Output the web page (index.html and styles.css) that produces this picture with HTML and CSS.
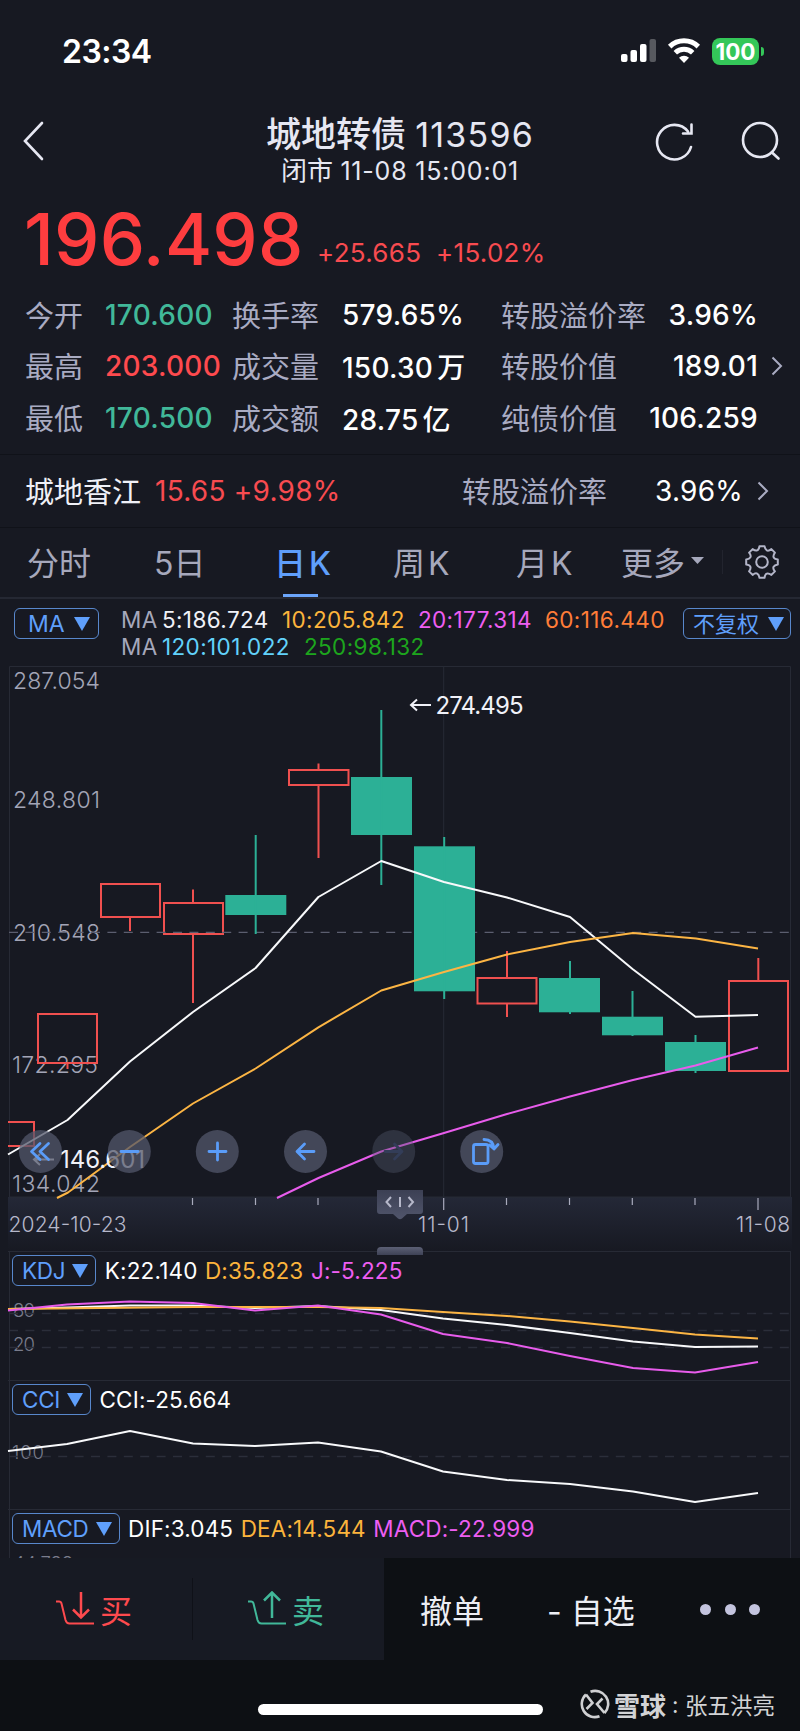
FILE: index.html
```html
<!DOCTYPE html>
<html lang="zh-CN">
<head>
  <meta charset="UTF-8">
  <meta name="viewport" content="width=device-width, initial-scale=1.0">
  <title>城地转债 113596</title>
  <link rel="stylesheet" href="styles.css">
</head>
<body>
  <div class="phone">
    <div class="status-bar">
      <span class="clock">23:34</span>
      <div class="status-icons">
        <svg class="signal" width="36" height="26" viewBox="0 0 36 26">
          <rect x="0" y="16" width="6.5" height="8" rx="2"/>
          <rect x="9.5" y="12" width="6.5" height="12" rx="2"/>
          <rect x="19" y="6" width="6.5" height="18" rx="2"/>
          <rect x="28.5" y="1" width="6.5" height="23" rx="2" opacity=".28"/>
        </svg>
        <svg class="wifi" width="34" height="26" viewBox="0 0 34 26">
          <path d="M17 25l-5-5.3a7.3 7.3 0 0 1 10 0z"/>
          <path class="arc" d="M8.3 14.7a12.7 12.7 0 0 1 17.4 0"/>
          <path class="arc" d="M2.7 8.6a20.6 20.6 0 0 1 28.6 0"/>
        </svg>
        <div class="battery">100</div>
      </div>
    </div>

    <header class="nav">
      <svg class="back" width="24" height="42" viewBox="0 0 24 42"><path d="M20 3L3 21l17 18"/></svg>
      <div class="nav-title">
        <h1>城地转债 <span>113596</span></h1>
        <p>闭市 <span>11-08 15:00:01</span></p>
      </div>
      <svg class="refresh" width="40" height="42" viewBox="0 0 40 42"><path d="M36 27A17.3 17.3 0 1 1 33 11.500M36.500 4.500V13.500H28"/></svg>
      <svg class="search" width="42" height="42" viewBox="0 0 42 42"><circle cx="20" cy="20" r="17"/><path d="M32 32.500L38.500 38.500"/></svg>
    </header>

    <section class="price">
      <span class="price-now">196.498</span>
      <span class="price-diff">+25.665</span>
      <span class="price-diff pct">+15.02%</span>
    </section>

    <section class="quote">
      <span class="label">今开</span><span class="value green">170.600</span>
      <span class="label">换手率</span><span class="value">579.65%</span>
      <span class="label">转股溢价率</span><span class="value end">3.96%</span><span></span>

      <span class="label">最高</span><span class="value red">203.000</span>
      <span class="label">成交量</span><span class="value">150.30<i>万</i></span>
      <span class="label">转股价值</span><span class="value end">189.01</span>
      <svg class="chevron" width="12" height="20" viewBox="0 0 12 20"><path d="M1.500 1.500L10 10l-8.500 8.500"/></svg>

      <span class="label">最低</span><span class="value green">170.500</span>
      <span class="label">成交额</span><span class="value">28.75<i>亿</i></span>
      <span class="label">纯债价值</span><span class="value end">106.259</span><span></span>
    </section>

    <section class="stock">
      <span class="stock-name">城地香江</span>
      <span class="stock-price">15.65 +9.98%</span>
      <span class="label">转股溢价率</span>
      <span class="stock-rate">3.96%</span>
      <svg class="chevron" width="12" height="20" viewBox="0 0 12 20"><path d="M1.500 1.500L10 10l-8.500 8.500"/></svg>
    </section>

    <nav class="tabs">
      <span class="tab">分时</span>
      <span class="tab">5日</span>
      <span class="tab active">日<b>K</b></span>
      <span class="tab">周<b>K</b></span>
      <span class="tab">月<b>K</b></span>
      <span class="tab more">更多<svg width="13" height="8" viewBox="0 0 13 8"><path d="M0 0h13L6.500 7z"/></svg></span>
      <span class="tab-settings">
        <svg width="36" height="36" viewBox="-18 -18 36 36">
          <path d="M-2.500-15.800H2.500Q3-12.600 4.800-11.600T9.400-12.900L12.900-9.400Q11-6.600 11.600-4.800T15.800-2.500V2.500Q12.600 3 11.600 4.800T12.900 9.400L9.400 12.900Q6.600 11 4.800 11.600T2.500 15.800H-2.500Q-3 12.600-4.800 11.600T-9.400 12.900L-12.900 9.400Q-11 6.600-11.600 4.800T-15.800 2.500V-2.500Q-12.600-3-11.600-4.800T-12.900-9.400L-9.400-12.900Q-6.600-11-4.800-11.600T-2.500-15.800z"/>
          <circle r="5.800"/>
        </svg>
      </span>
    </nav>

    <section class="ma">
      <span class="picker">MA<svg width="16" height="14" viewBox="0 0 16 14"><path d="M0 0h16L8 14z"/></svg></span>
      <div class="ma-values">
        <div class="ma-row">
          <span class="muted">MA</span><span>5:186.724</span><span class="orange">10:205.842</span><span class="pink">20:177.314</span><span class="coral">60:116.440</span>
        </div>
        <div class="ma-row second">
          <span class="muted">MA</span><span class="sky">120:101.022</span><span class="lime">250:98.132</span>
        </div>
      </div>
      <span class="picker adjust">不复权<svg width="16" height="14" viewBox="0 0 16 14"><path d="M0 0h16L8 14z"/></svg></span>
    </section>

    <!-- candlestick chart, viewBox shares the page's y axis -->
    <svg class="kline" width="800" height="590" viewBox="0 661 800 590">
      <defs>
        <linearGradient id="axisFill" x1="0" y1="0" x2="0" y2="1">
          <stop offset="0" stop-color="#242837"/><stop offset="1" stop-color="#171922"/>
        </linearGradient>
        <linearGradient id="gripFill" x1="0" y1="0" x2="0" y2="1">
          <stop offset="0" stop-color="#3c4054"/><stop offset="1" stop-color="#50556b"/>
        </linearGradient>
      </defs>
      <rect x="8" y="1197" width="784" height="54" fill="url(#axisFill)"/>
      <path class="frame" d="M9.500 1197V666.500H790.500V1197M443.700 666.500V1197M9.500 1197H790.500"/>

      <g class="axis-label">
        <text x="13" y="689" textLength="87">287.054</text>
        <text x="13" y="808" textLength="87">248.801</text>
        <text x="13" y="940.500" textLength="87">210.548</text>
        <text x="12" y="1073" textLength="86">172.295</text>
        <text x="12" y="1191.500" textLength="88">134.042</text>
      </g>

      <g class="up">
        <path d="M8 1122H34V1146H8"/>
        <rect x="38" y="1014" width="59" height="49"/><path d="M67.500 1063v6"/>
        <rect x="101" y="884" width="59" height="33"/><path d="M130 917v14"/>
        <rect x="164" y="903" width="59" height="31"/><path d="M193 889.500V903M193 934v69"/>
        <rect x="289" y="770" width="59.500" height="15"/><path d="M318.500 763.500V770M318.500 785v73"/>
        <rect x="477.500" y="978" width="59" height="25.500"/><path d="M507 951v27M507 1003.500V1017"/>
        <rect x="729" y="981" width="59" height="90"/><path d="M758.300 958v23"/>
      </g>
      <path class="mid-line" d="M9 932.300H790"/>
      <g class="down">
        <rect x="225.300" y="895" width="61" height="20"/><rect x="254.700" y="835" width="2" height="99"/>
        <rect x="351" y="777" width="61" height="58"/><rect x="380.300" y="710" width="2" height="175"/>
        <rect x="414" y="846.300" width="61" height="145"/><rect x="443.200" y="837" width="2" height="162"/>
        <rect x="539" y="978" width="61" height="34.300"/><rect x="569" y="961" width="2" height="53"/>
        <rect x="602" y="1016.700" width="61" height="18.600"/><rect x="631.500" y="991" width="2" height="45"/>
        <rect x="665" y="1042" width="61" height="29"/><rect x="694.500" y="1035" width="2" height="38"/>
      </g>

      <polyline class="line white" points="8,1154.500 67.500,1120 130,1061.500 193,1012 255.600,968 318.400,897 381.300,861 444,882 507,897.500 570,917 632.500,969 695.500,1016.700 758,1015"/>
      <polyline class="line gold" points="57,1198 68,1192.500 130,1147 193,1103.500 255.600,1068.500 318.400,1027.300 381.300,990.500 444,972 507,954.500 570,942 633,933 696,938.500 758,948.500"/>
      <polyline class="line magenta" points="277,1198 318.500,1178 381.300,1151.500 444,1133 507,1114 570,1096.500 633,1080 695.500,1065.500 758,1047.500"/>

      <g class="mark">
        <path d="M431 705H411M417 699.500L411 705l6 5.500"/>
        <text x="435.500" y="713.500" textLength="88">274.495</text>
        <path d="M54 1159.500H34M40 1154l-6 5.500 6 5.500"/>
        <text x="60" y="1167.700" textLength="85">146.601</text>
      </g>

      <g class="controls">
        <circle cx="40.500" cy="1151.500" r="21.500"/>
        <circle cx="129.300" cy="1151.500" r="21.500"/>
        <circle cx="217.300" cy="1151.500" r="21.500"/>
        <circle cx="305.500" cy="1151.500" r="21.500"/>
        <circle class="dim" cx="393.700" cy="1151.500" r="21.500"/>
        <circle cx="481.700" cy="1151.500" r="21.500"/>
        <path d="M40 1143.500l-8.500 8 8.500 8M48.500 1143.500l-8.500 8 8.500 8"/>
        <path d="M121 1151.500h17M209 1151.500h17M217.500 1143v17"/>
        <path d="M314 1151.500h-16.500M304.500 1144l-7.500 7.500 7.500 7.500"/>
        <path class="dim" d="M385 1151.500h16.500M394.500 1144l7.500 7.500-7.500 7.500"/>
        <rect x="473.500" y="1144.500" width="14.500" height="19" rx="2"/>
        <path d="M484 1139.500c6 0 9.500 3 10 9.500M489.500 1145l4.500 4 4-4.500"/>
      </g>

      <path class="ticks" d="M192.500 1198v7M255.500 1198v7M318 1198v7M506.500 1198v7M569.500 1198v7M632.300 1198v7M695 1198v7M443.700 1198v12M758 1198v12"/>
      <g class="date">
        <text x="8.500" y="1231.500" textLength="118">2024-10-23</text>
        <text x="418" y="1231.500" textLength="51">11-01</text>
        <text x="736" y="1231.500" textLength="54">11-08</text>
      </g>

      <path fill="url(#gripFill)" d="M377 1190h46v21a3 3 0 0 1-3 3h-13l-5 4.500q-2 1.500-4 0l-5-4.500h-13a3 3 0 0 1-3-3z"/>
      <path class="grip" d="M391 1197l-4.500 5 4.500 5M400 1197v10M408.500 1197l4.500 5-4.500 5"/>
    </svg>

    <section class="indicator">
      <div class="handle"></div>
      <svg class="plot" width="800" height="129" viewBox="0 1251 800 129">
        <path class="frame" d="M8 1251.500H791M9.500 1251V1380M790.500 1251V1380"/>
        <g class="scale">
          <text x="13" y="1316.500" textLength="22">80</text>
          <text x="13" y="1350.500" textLength="22">20</text>
        </g>
        <path class="guide" d="M9 1313.500H790M9 1330.500H790M9 1347.500H790"/>
        <polyline class="line white" points="8,1309 67,1307.500 130,1305.500 193,1305.500 255,1308 318,1306 381,1310 443,1318.500 507,1325 570,1333 633,1341.500 695,1347 758,1346.500"/>
        <polyline class="line gold" points="8,1309 193,1307 318,1307 381,1308 443,1312 507,1316 570,1321.500 633,1328 695,1334.500 758,1338.500"/>
        <polyline class="line magenta" points="8,1310.500 67,1304.500 130,1301.500 193,1303 255,1310.500 318,1305.500 381,1314.500 443,1334 507,1343 570,1356 633,1368 695,1372.500 758,1362"/>
      </svg>
      <div class="indicator-head">
        <span class="picker">KDJ<svg width="16" height="14" viewBox="0 0 16 14"><path d="M0 0h16L8 14z"/></svg></span>
        <span>K:22.140</span><span class="orange">D:35.823</span><span class="pink">J:-5.225</span>
      </div>
    </section>

    <section class="indicator">
      <svg class="plot" width="800" height="129" viewBox="0 1380 800 129">
        <path class="frame" d="M8 1380.500H791M9.500 1380V1509M790.500 1380V1509"/>
        <g class="scale"><text x="12" y="1458.500" textLength="32">100</text></g>
        <path class="guide" d="M9 1456.500H790"/>
        <polyline class="line white" points="8,1451 67,1444 130,1431 193,1443.500 255,1446 318,1442.500 381,1451.500 443,1471.500 507,1480 570,1484 633,1491.500 695,1502 758,1493"/>
      </svg>
      <div class="indicator-head">
        <span class="picker">CCI<svg width="16" height="14" viewBox="0 0 16 14"><path d="M0 0h16L8 14z"/></svg></span>
        <span>CCI:-25.664</span>
      </div>
    </section>

    <section class="indicator last">
      <svg class="plot" width="800" height="49" viewBox="0 1509 800 49">
        <path class="frame" d="M8 1509.500H791M9.500 1509V1558M790.500 1509V1558"/>
        <g class="scale"><text x="13" y="1570" textLength="60">44.788</text></g>
      </svg>
      <div class="indicator-head">
        <span class="picker">MACD<svg width="16" height="14" viewBox="0 0 16 14"><path d="M0 0h16L8 14z"/></svg></span>
        <span>DIF:3.045</span><span class="orange">DEA:14.544</span><span class="pink">MACD:-22.999</span>
      </div>
    </section>

    <footer class="footer">
      <div class="actions">
        <div class="trade buy">
          <svg width="40" height="36" viewBox="0 0 40 36"><path d="M1 10.500h3q2 0 2.500 2l4 16.500q1 3.500 4 3.500H39"/><path class="arrow" d="M26 1v25M18 18.500l8 8 8-8"/></svg>
          <span>买</span>
        </div>
        <div class="trade sell">
          <svg width="40" height="36" viewBox="0 0 40 36"><path d="M1 10.500h3q2 0 2.500 2l4 16.500q1 3.500 4 3.500H39"/><path class="arrow" d="M25 27V2M17 9.500l8-8 8 8"/></svg>
          <span>卖</span>
        </div>
        <span class="cancel">撤单</span>
        <span class="favorite">- 自选</span>
        <div class="dots"><i></i><i></i><i></i></div>
      </div>
      <div class="bottom">
        <div class="home-bar"></div>
        <div class="watermark">
          <svg width="30" height="30" viewBox="0 0 30 30">
            <path d="M6 5.500A13 13 0 0 0 19.500 27.200M10.500 2.800A13 13 0 0 1 24.500 24M6 5.500l6.500 8.500-6 6M22.500 9.500L17 15l7.500 9"/>
          </svg>
          <b>雪球</b><span class="colon">:</span><span>张五洪亮</span>
        </div>
      </div>
    </footer>
  </div>
</body>
</html>
```

FILE: styles.css
```css
* {
  box-sizing: border-box;
}

body {
  margin: 0;
  background-color: #171922;
  color: #fff;
  font-family: Inter, "Noto Sans CJK SC", sans-serif;
}

svg {
  display: block;
  flex-shrink: 0;
}

h1, p {
  margin: 0;
  font-weight: 400;
}

i, b {
  font-style: normal;
  font-weight: inherit;
}

.phone {
  width: 800px;
  height: 1731px;
  overflow: hidden;
}

/* status bar */
.status-bar {
  height: 102px;
  padding: 0 37px 0 62px;
  display: flex;
  align-items: center;
  justify-content: space-between;
}

.clock {
  font-size: 32px;
  font-weight: 600;
  letter-spacing: -0.5px;
}

.status-icons {
  display: flex;
  align-items: center;
  fill: #fff;
}

.wifi {
  margin: 0 11px 0 10px;
}

.wifi .arc {
  fill: none;
  stroke: #fff;
  stroke-width: 5;
}

.battery {
  position: relative;
  width: 47px;
  height: 27px;
  margin-right: 4px;
  border-radius: 8px;
  background-color: #34c759;
  font-size: 22.500px;
  font-weight: 700;
  line-height: 27px;
  text-align: center;
}

.battery::after {
  content: "";
  position: absolute;
  right: -5px;
  top: 9px;
  width: 3px;
  height: 9px;
  border-radius: 0 3px 3px 0;
  background-color: #34c759;
}

/* title */
.nav {
  height: 88px;
  padding: 13px 18px 0 22px;
  display: flex;
  align-items: flex-start;
  color: #e6e7f2;
}

.nav svg {
  fill: none;
  stroke: #e6e7f2;
  stroke-width: 2.6;
  stroke-linecap: round;
  margin-top: 5px;
}

.nav-title {
  flex: 1;
  padding-left: 217px;
  text-align: center;
  white-space: nowrap;
}

.nav-title h1 {
  font-size: 35px;
  line-height: 38px;
  font-weight: 500;
}

.nav-title h1 span {
  font-size: 34px;
  font-weight: 400;
  letter-spacing: 1.200px;
}

.nav-title p {
  font-size: 26px;
  line-height: 34px;
}

.nav-title p span {
  font-size: 25px;
  letter-spacing: 0.800px;
}

.refresh {
  margin-left: 118px;
}

.search {
  margin-left: 45px;
}

/* price */
.price {
  height: 99px;
  padding-left: 24px;
  display: flex;
  align-items: baseline;
  color: #fe3d3f;
}

.price-now {
  font-size: 72px;
  line-height: 97px;
  font-weight: 500;
  letter-spacing: 0.200px;
  width: 293px;
}

.price-diff {
  position: relative;
  top: -3px;
  width: 119px;
  font-size: 26px;
  letter-spacing: 0.300px;
  color: #f84b50;
}

.quote {
  height: 166px;
  padding: 0 17px 11px 25px;
  display: grid;
  grid-template-columns: 80px 127px 110px 159px 137px 120px 25px;
  grid-template-rows: repeat(3, 51.600px);
  align-items: center;
  white-space: nowrap;
  border-bottom: 1px solid #101219;
}

.label {
  padding-bottom: 2px;
  font-size: 29px;
  color: #a9abc2;
}

.value {
  font-size: 28px;
  font-weight: 500;
  letter-spacing: 0.250px;
}

.value i {
  margin-left: 4px;
}

.value.end {
  text-align: right;
}

.value.green {
  color: #41b899;
}

.value.red {
  color: #fe4a4e;
}

.chevron {
  fill: none;
  stroke: #a9abc2;
  stroke-width: 2;
}

.quote .chevron {
  justify-self: end;
}

/* underlying stock */
.stock {
  height: 73px;
  padding: 0 31px 0 25px;
  display: flex;
  align-items: center;
  font-size: 28px;
  letter-spacing: 0.250px;
  border-bottom: 1px solid #101219;
}

.stock .label {
  letter-spacing: 0;
}

.stock-name {
  width: 130px;
  padding-bottom: 2px;
  font-size: 29px;
  letter-spacing: 0;
  color: #f0f1f8;
}

.stock-price {
  width: 307px;
  color: #f84b50;
}

.stock-rate {
  flex: 1;
  text-align: right;
  margin-right: 14px;
}

/* period tabs */
.tabs {
  height: 71px;
  padding: 0 0 4px 27px;
  display: grid;
  grid-template-columns: 127px 120px 119px 123px 105px 101px 78px;
  align-items: center;
  font-size: 32px;
  color: #a6a8bc;
  border-bottom: 2px solid #252833;
}

.tab {
  position: relative;
  white-space: nowrap;
}

.tab b {
  margin-left: 3px;
}

.tab.active {
  color: #5f9ffb;
  font-weight: 500;
}

.tab.active::after {
  content: "";
  position: absolute;
  left: 9px;
  bottom: -13px;
  width: 35px;
  height: 3px;
  background-color: #6ba5fb;
}

.tab.more {
  display: flex;
  align-items: center;
}

.tab.more svg {
  margin-left: 6px;
  fill: #a6a8bc;
}

.tab-settings {
  position: relative;
  top: 1px;
  height: 24px;
  display: flex;
  align-items: center;
  justify-content: center;
  border-left: 1px solid #22242e;
}

.tab-settings svg {
  fill: none;
  stroke: #b3b5c8;
  stroke-width: 2;
  stroke-linejoin: round;
}

/* moving averages */
.ma {
  height: 62px;
  padding: 9px 9px 0 14px;
  display: flex;
  align-items: flex-start;
}

.picker {
  height: 31px;
  padding: 0 8px 0 9px;
  display: flex;
  align-items: center;
  gap: 7px;
  border: 1.500px solid #5887cc;
  border-radius: 6px;
  font-size: 22.500px;
  line-height: 28px;
  color: #5f9ffb;
  fill: #5f9ffb;
  white-space: nowrap;
}

.ma > .picker {
  width: 85px;
  padding: 0 8px 0 13px;
  font-size: 23px;
  gap: 9px;
}

.ma > .picker.adjust {
  width: 108px;
  padding: 0 8px 0 9px;
  font-size: 22px;
}

.ma-values {
  width: 563px;
  margin: -1px 0 0 22px;
}

.ma-row {
  display: grid;
  grid-template-columns: 41px 120px 136px 127px 130px;
  font-size: 22.500px;
  line-height: 26.500px;
  letter-spacing: 0.400px;
  color: #f0f1f8;
  white-space: nowrap;
}

.ma-row.second {
  grid-template-columns: 41px 142px 140px;
}

.muted { color: #a6a8bc; }
.orange { color: #fcb43c; }
.pink { color: #ee5ef2; }
.coral { color: #ff7d38; }
.sky { color: #62d2fb; }
.lime { color: #1da51d; }

/* chart */
.frame {
  fill: none;
  stroke: #272a35;
  stroke-width: 1;
}

.axis-label {
  font-size: 23px;
  font-weight: 300;
  fill: #a3a5b7;
}

.up {
  fill: none;
  stroke: #f0504f;
  stroke-width: 2;
}

.down {
  fill: #2cb096;
}

.mid-line {
  stroke: #5b5e6f;
  stroke-width: 1.3;
  stroke-dasharray: 9 7.400;
}

.line {
  fill: none;
  stroke-width: 2;
  stroke-linejoin: round;
}

.white { stroke: #f8f9fb; }
.gold { stroke: #fcb544; }
.magenta { stroke: #e85cec; }

.mark {
  font-size: 24px;
  fill: #f0f1f8;
}

.mark path {
  fill: none;
  stroke: #f0f1f8;
  stroke-width: 2;
}

.controls {
  fill: none;
  stroke: #5a9cf8;
  stroke-width: 2.800;
  stroke-linecap: round;
  stroke-linejoin: round;
}

.controls circle {
  fill: rgba(83, 87, 107, 0.75);
  stroke: none;
}

.controls circle.dim {
  fill: rgba(83, 87, 107, 0.4);
}

.controls path.dim {
  stroke: #333d58;
}

.ticks {
  stroke: #a9abbd;
  stroke-width: 1.200;
}

.date {
  font-size: 21px;
  font-weight: 300;
  fill: #b6b8ca;
}

.grip {
  fill: none;
  stroke: #b6b8ca;
  stroke-width: 2;
}

/* indicators */
.indicator {
  position: relative;
  height: 129px;
}

.indicator.last {
  height: 49px;
}

.plot {
  position: absolute;
  left: 0;
  top: 0;
}

.handle {
  position: absolute;
  z-index: 1;
  left: 377px;
  top: -4px;
  width: 46px;
  height: 8px;
  border-radius: 4px 4px 0 0;
  background: linear-gradient(#5c6075, #3e4256);
}

.scale {
  font-size: 18.500px;
  font-weight: 300;
  fill: #797c8c;
}

.guide {
  stroke: #2b2e3a;
  stroke-width: 1.300;
  stroke-dasharray: 9 7.400;
}

.indicator-head {
  position: relative;
  padding: 4px 0 0 12px;
  display: flex;
  align-items: center;
  gap: 7.500px;
  font-size: 22.500px;
  line-height: 30px;
  letter-spacing: 0.150px;
}

.indicator-head .picker {
  padding: 0 7px 0 9px;
  letter-spacing: -0.300px;
}

.indicator-head .picker + span {
  margin-left: 1px;
}

/* bottom bar */
.footer {
  height: 173px;
  background-color: #0d1014;
}

.actions {
  height: 102px;
  display: grid;
  grid-template-columns: 192px 192px 36px 127px 158px 95px;
  align-items: center;
  font-size: 32px;
  color: #eceef4;
}

.trade {
  height: 102px;
  padding-left: 55px;
  display: flex;
  align-items: center;
  gap: 5px;
  background-color: #171a23;
}

.trade svg {
  fill: none;
  stroke: currentColor;
  stroke-width: 2;
}

.trade .arrow {
  stroke-width: 2.500;
}

.buy {
  color: #fe4a4e;
}

.sell {
  color: #41b899;
  background-image: linear-gradient(#0f1118, #0f1118);
  background-size: 1px 62px;
  background-position: 0 center;
  background-repeat: no-repeat;
}

.cancel {
  grid-column: 4;
}

.dots {
  display: flex;
  gap: 13.600px;
  margin-left: -5px;
}

.dots i {
  width: 11px;
  height: 11px;
  border-radius: 50%;
  background-color: #c3c4de;
}

.bottom {
  height: 71px;
  padding-left: 258px;
  display: flex;
}

.home-bar {
  width: 285px;
  height: 11px;
  margin-top: 44px;
  border-radius: 6px;
  background-color: #fff;
}

.watermark {
  height: 40px;
  margin: 24px 0 0 37px;
  display: flex;
  align-items: center;
  font-size: 22.500px;
  color: #d2d3d5;
  white-space: nowrap;
}

.watermark svg {
  margin-right: 4px;
  fill: none;
  stroke: #cfd0d2;
  stroke-width: 2.600;
}

.watermark b {
  font-size: 26px;
  font-weight: 700;
}

.colon {
  width: 19px;
  padding-left: 6px;
}
```
